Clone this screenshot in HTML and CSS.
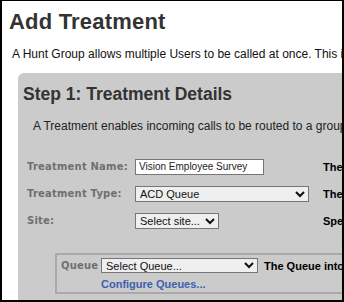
FILE: index.html
```html
<!DOCTYPE html>
<html lang="en">
<head>
  <meta charset="UTF-8" />
  <title>Add Treatment</title>
  <link rel="stylesheet" href="styles.css">
</head>
<body>
  <div class="frame">
    <h1>Add Treatment</h1>
    <p class="intro">A Hunt Group allows multiple Users to be called at once. This is useful for sales or support teams.</p>

    <div class="panel">
      <h2>Step 1: Treatment Details</h2>
      <p class="panel-desc">A Treatment enables incoming calls to be routed to a group of users.</p>

      <div class="form-row">
        <label class="field-label" for="tname">Treatment Name:</label>
        <div class="field"><input id="tname" class="text-input" type="text" value="Vision Employee Survey"></div>
        <span class="hint">The name of the treatment</span>
      </div>
      <div class="form-row">
        <label class="field-label" for="ttype">Treatment Type:</label>
        <div class="field">
          <select id="ttype" class="select select-wide">
            <option>ACD Queue</option>
            <option>Hunt Group</option>
          </select>
        </div>
        <span class="hint">The type of treatment</span>
      </div>
      <div class="form-row">
        <label class="field-label" for="site">Site:</label>
        <div class="field">
          <select id="site" class="select select-site">
            <option>Select site...</option>
          </select>
        </div>
        <span class="hint">Specify the site</span>
      </div>

      <div class="queue-box">
        <div class="queue-row">
          <label class="field-label queue-label" for="queue">Queue</label>
          <select id="queue" class="select select-queue">
            <option>Select Queue...</option>
          </select>
          <span class="hint">The Queue into which calls are placed</span>
        </div>
        <a class="configure-link" href="#">Configure Queues...</a>
      </div>
    </div>
  </div>
</body>
</html>
```

FILE: styles.css
```css
* {
  box-sizing: border-box;
}

body {
  margin: 0;
  font-family: 'Liberation Sans', Arial, sans-serif;
  background: #fff;
}

.frame {
  width: 344px;
  height: 302px;
  border: 2px solid #000;
  border-top-width: 1px;
  overflow: hidden;
  background: #fff;
}

h1 {
  margin: 7px 0 0 0;
  padding-left: 7px;
  font-size: 22px;
  line-height: 28px;
  font-weight: bold;
  letter-spacing: 0.2px;
  color: #333;
  white-space: nowrap;
}

.intro {
  margin: 10px 0 0 0;
  padding-left: 10px;
  font-size: 12px;
  line-height: 16px;
  color: #111;
  white-space: nowrap;
}

.panel {
  margin: 11px 0 0 16px;
  width: 420px;
  height: 260px;
  padding: 10px 0 0 5px;
  background: #cbcbcb;
  border-radius: 6px 0 0 0;
}

h2 {
  margin: 0;
  font-size: 17.5px;
  line-height: 22px;
  font-weight: bold;
  color: #333;
  white-space: nowrap;
}

.panel-desc {
  margin: 13px 0 19px 10px;
  font-size: 12px;
  line-height: 16px;
  color: #222;
  white-space: nowrap;
}

.form-row {
  display: flex;
  align-items: center;
  height: 27px;
  padding-left: 4px;
  white-space: nowrap;
}

.field-label {
  flex-shrink: 0;
  width: 108px;
  font-family: 'DejaVu Sans', Verdana, sans-serif;
  font-size: 10px;
  font-weight: bold;
  letter-spacing: 0.2px;
  color: #707070;
}

.field {
  flex-shrink: 0;
  width: 188px;
}

.text-input {
  display: block;
  width: 129px;
  height: 16px;
  margin: 0;
  padding: 0 3px;
  border: 1px solid #767676;
  background: #fff;
  font-family: 'Liberation Sans', Arial, sans-serif;
  font-size: 10px;
  color: #222;
}

.select {
  display: block;
  flex-shrink: 0;
  height: 16px;
  margin: 0;
  padding: 0;
  border: 1px solid #767676;
  border-radius: 0;
  background-color: #efefef;
  font-family: 'Liberation Sans', Arial, sans-serif;
  font-size: 11px;
  color: #111;
}

.select-wide {
  width: 174px;
}

.select-site {
  width: 84px;
}

.hint {
  flex-shrink: 0;
  font-size: 11px;
  font-weight: bold;
  color: #000;
}

.queue-box {
  margin: 19px 0 0 32px;
  padding: 2px 0 1px 4px;
  border: 2px solid #a9a9a9;
  border-right: none;
  white-space: nowrap;
}

.queue-row {
  display: flex;
  align-items: center;
  height: 17px;
}

.queue-label {
  width: 40px;
}

.select-queue {
  width: 157px;
  height: 15px;
  margin-right: 6px;
}

.configure-link {
  display: block;
  margin: 3px 0 0 40px;
  font-size: 11px;
  line-height: 14px;
  font-weight: bold;
  color: #3d5fae;
  text-decoration: none;
}
```
